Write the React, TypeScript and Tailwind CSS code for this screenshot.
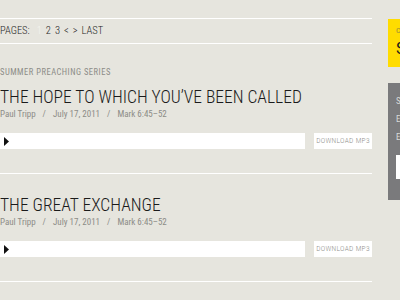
type Sermon = {
  series?: string;
  title: string;
  speaker: string;
  date: string;
  passage: string;
};

const sermons: Sermon[] = [
  {
    series: "SUMMER PREACHING SERIES",
    title: "THE HOPE TO WHICH YOU’VE BEEN CALLED",
    speaker: "Paul Tripp",
    date: "July 17, 2011",
    passage: "Mark 6:45–52",
  },
  {
    title: "THE GREAT EXCHANGE",
    speaker: "Paul Tripp",
    date: "July 17, 2011",
    passage: "Mark 6:45–52",
  },
];

function Player() {
  return (
    <div className="flex h-4 gap-[9px]">
      <div className="flex flex-1 items-center bg-white pl-1">
        <svg width="5" height="9" viewBox="0 0 5 9">
          <path d="M0 0 L5 4.5 L0 9 Z" fill="#111" />
        </svg>
      </div>
      <button className="flex w-[58px] items-center justify-center bg-white text-[7.5px] font-light tracking-[0.3px] text-[#8e8e8a]">
        DOWNLOAD MP3
      </button>
    </div>
  );
}

function SermonItem({ sermon, first }: { sermon: Sermon; first: boolean }) {
  return (
    <div
      className={
        first
          ? "flex flex-col border-b border-white pt-[23px] pb-[24px]"
          : "flex flex-col border-b border-white pt-[21px] pb-[24px]"
      }
    >
      {sermon.series && (
        <div className="mb-[10px] text-[8.5px] leading-[10px] tracking-[0.5px] text-[#8c8c87]">
          {sermon.series}
        </div>
      )}
      <h2 className="text-[17.5px] font-light leading-[20px] text-[#1b1b1b]">{sermon.title}</h2>
      <div className="mt-[2px] flex gap-[7px] text-[9px] leading-[10px] text-[#8c8c87]">
        <span>{sermon.speaker}</span>
        <span>/</span>
        <span>{sermon.date}</span>
        <span>/</span>
        <span>{sermon.passage}</span>
      </div>
      <div className="mt-[14px]">
        <Player />
      </div>
    </div>
  );
}

export default function App() {
  return (
    <div className="flex h-[300px] w-[400px] gap-4 overflow-hidden bg-[#e6e5de] font-['Roboto_Condensed',_sans-serif]">
      <div className="flex w-[372px] shrink-0 flex-col pt-[18px]">
        <div className="flex h-[26px] items-center gap-[4px] border-y border-white text-[10.5px] font-light text-[#1f1f1f]">
          <span className="mr-[3px]">PAGES:</span>
          <span className="text-[#f4f4ee]">1</span>
          <span>2</span>
          <span>3</span>
          <span>&lt;</span>
          <span>&gt;</span>
          <span>LAST</span>
        </div>
        {sermons.map((s, i) => (
          <SermonItem key={i} sermon={s} first={i === 0} />
        ))}
      </div>

      <div className="flex w-[180px] shrink-0 flex-col pt-[19px]">
        <div className="h-[48px] bg-[#ffdc00] px-2 pt-[7px]">
          <div className="text-[8px] leading-[10px] tracking-[0.5px] text-[#9a8a3a]">CURRENT SERIES</div>
          <div className="mt-[2px] text-[17px] leading-[20px] text-[#1b1b1b]">SUMMER PREACHING</div>
        </div>
        <div className="mt-4 flex h-[117px] flex-col bg-[#7a7a7c] px-2 pt-[13px]">
          <div className="text-[9px] leading-[10px] tracking-[0.5px] text-[#d9d9d9]">SUBSCRIBE</div>
          <div className="mt-2 text-[9px] leading-[10px] text-[#d9d9d9]">Enter your email below</div>
          <div className="mt-2 text-[9px] leading-[10px] text-[#d9d9d9]">Email address</div>
          <div className="mt-[13px] h-6 bg-white"></div>
        </div>
      </div>
    </div>
  );
}
